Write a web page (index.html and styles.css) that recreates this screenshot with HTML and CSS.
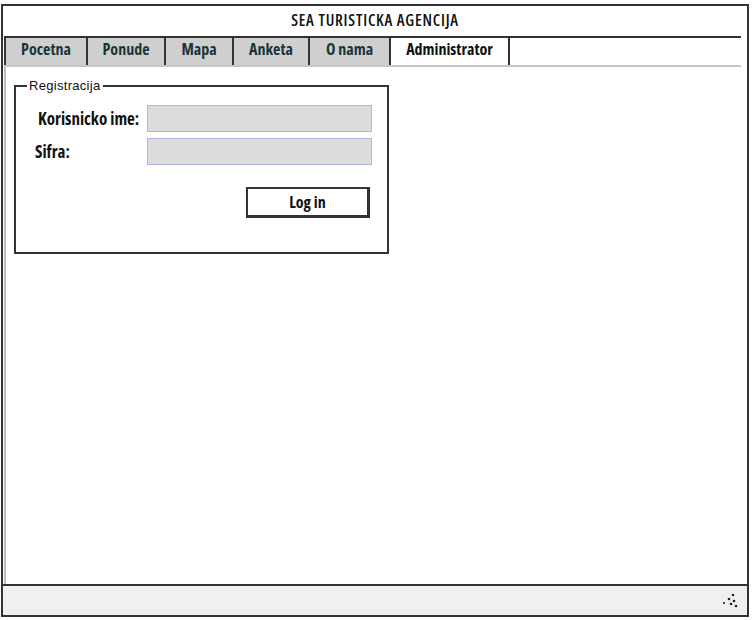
FILE: index.html
```html
<!DOCTYPE html>
<html lang="sr">
<head>
    <meta charset="UTF-8" />
    <title>SEA Turisticka Agencija</title>
    <link rel="stylesheet" href="styles.css">
</head>
<body>
    <div class="prozor">
        <div class="naslov">SEA TURISTICKA AGENCIJA</div>

        <div class="tabovi">
            <a class="tab tab-pocetna">Pocetna</a>
            <a class="tab tab-ponude">Ponude</a>
            <a class="tab tab-mapa">Mapa</a>
            <a class="tab tab-anketa">Anketa</a>
            <a class="tab tab-onama">O nama</a>
            <a class="tab tab-admin aktivan">Administrator</a>
        </div>

        <div class="sadrzaj">
            <fieldset class="registracija">
                <legend>Registracija</legend>
                <div class="red">
                    <label for="korisnik" class="lbl-korisnik">Korisnicko ime:</label>
                    <input type="text" id="korisnik" class="polje">
                </div>
                <div class="red">
                    <label for="sifra" class="lbl-sifra">Sifra:</label>
                    <input type="password" id="sifra" class="polje">
                </div>
                <div class="dugmad">
                    <button class="btn-login">Log in</button>
                </div>
            </fieldset>
        </div>

        <div class="statusna">
            <svg class="grip" width="18" height="16" viewBox="0 0 18 16">
                <circle cx="12" cy="2" r="1.3" fill="#222"/>
                <circle cx="8" cy="6" r="1.3" fill="#222"/>
                <circle cx="13" cy="8" r="1.3" fill="#222"/>
                <circle cx="3" cy="10" r="1.1" fill="#222"/>
                <circle cx="10" cy="11" r="1.3" fill="#222"/>
                <circle cx="15" cy="13" r="1.3" fill="#222"/>
            </svg>
        </div>
    </div>
</body>
</html>
```

FILE: styles.css
```css
body {
    margin: 0;
    background: #fff;
    font-family: "Open Sans", sans-serif;
    font-stretch: 75%;
    color: #111;
}
.prozor {
    box-sizing: border-box;
    margin: 4px 0 0 1px;
    width: 748px;
    height: 613px;
    border: 2px solid #333;
    display: flex;
    flex-direction: column;
}
.naslov {
    height: 30px;
    line-height: 28px;
    text-align: center;
    font-size: 16px;
    font-weight: 600;
    letter-spacing: 0.8px;
}
.tabovi {
    display: flex;
    margin: 0 6px 0 1px;
    border-top: 2px solid #333;
    height: 27px;
    box-shadow: 0 2px 0 #c6c6c6;
}
.tab {
    box-sizing: border-box;
    border-left: 2px solid #333;
    background-color: #cfcfcf;
    color: #17363b;
    font-size: 16px;
    font-weight: 700;
    line-height: 23px;
    text-align: center;
}
.tab-pocetna { width: 82px; }
.tab-ponude { width: 78px; }
.tab-mapa { width: 68px; }
.tab-anketa { width: 76px; }
.tab-onama { width: 81px; }
.tab-admin {
    width: 121px;
    border-right: 2px solid #333;
}
.tab.aktivan {
    background-color: #fff;
    color: #111;
}
.sadrzaj {
    flex: 1;
    margin: 2px 0 0 1px;
    border-left: 2px solid #bdbdbd;
    padding: 11px 0 0 8px;
}
.registracija {
    box-sizing: border-box;
    width: 375px;
    height: 176px;
    margin: 0;
    padding: 12px 14px 0 19px;
    border: 2px solid #333;
}
.registracija legend {
    font-family: "Liberation Sans", Arial, sans-serif;
    font-stretch: normal;
    font-size: 13px;
    letter-spacing: 0.3px;
    padding: 0 2px;
    margin-left: -8px;
}
.red {
    display: flex;
    align-items: center;
    margin-bottom: 6px;
}
.red label {
    width: 109px;
    padding-left: 3px;
    font-size: 17px;
    font-weight: 700;
}
.lbl-sifra {
    margin-left: -3px;
    margin-right: 3px;
}
.polje {
    box-sizing: border-box;
    width: 225px;
    height: 27px;
    margin: 0;
    border: 1px solid #a8b8e8;
    background-color: #dcdcdc;
}
.dugmad {
    display: flex;
    justify-content: flex-end;
    margin-top: 22px;
}
.btn-login {
    box-sizing: border-box;
    width: 124px;
    height: 31px;
    margin-right: 3px;
    background: #fff;
    border: 2px solid #333;
    border-right-width: 3px;
    border-bottom-width: 3px;
    font-family: inherit;
    font-stretch: 75%;
    font-size: 16px;
    font-weight: 700;
    color: #111;
}
.statusna {
    height: 29px;
    border-top: 2px solid #333;
    background-color: #f0f0f0;
    display: flex;
    justify-content: flex-end;
    align-items: center;
    padding-right: 8px;
}
```
